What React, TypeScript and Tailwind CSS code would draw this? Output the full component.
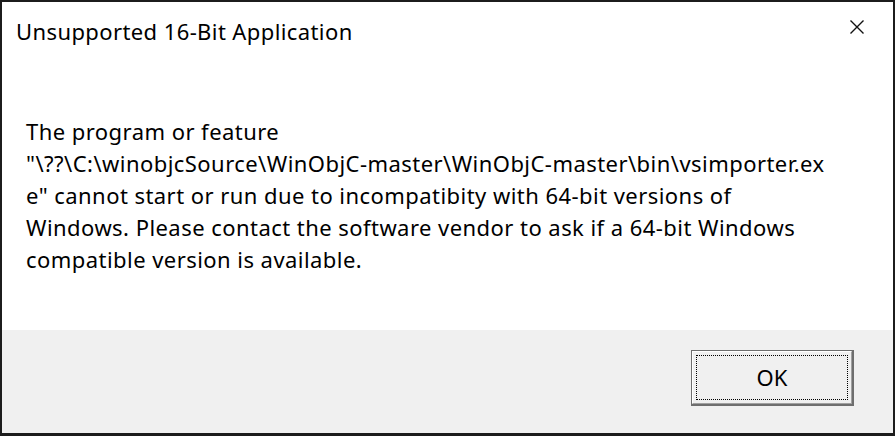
import React from "react";

export default function App() {
  return (
    <div
      className="w-[895px] h-[436px] flex flex-col bg-white border-l-2 border-t-2 border-r-2 border-b-[3px] border-[#1c1c1c] text-black"
      style={{ fontFamily: '"Noto Sans", "Open Sans", sans-serif' }}
    >
      <div className="flex-1 flex flex-col">
        <div className="flex items-start justify-between h-[60px]">
          <div className="pl-[14px] pt-[14px] text-[22px] leading-[30px] tracking-[0.4px]">Unsupported 16-Bit Application</div>
          <div className="pt-[18px] pr-[29px]">
            <svg width="14" height="14" viewBox="0 0 14 14">
              <path d="M0.5 0.5 L13.5 13.5 M13.5 0.5 L0.5 13.5" stroke="#111" strokeWidth="1.4" fill="none" />
            </svg>
          </div>
        </div>
        <div className="pl-[24px] pt-[53px] text-[22px] leading-[32px] tracking-[0.45px]">
          The program or feature
          <br />
          "\??\C:\winobjcSource\WinObjC-master\WinObjC-master\bin\vsimporter.ex
          <br />
          e" cannot start or run due to incompatibity with 64-bit versions of
          <br />
          Windows. Please contact the software vendor to ask if a 64-bit Windows
          <br />
          compatible version is available.
        </div>
      </div>
      <div className="h-[103px] bg-[#f0f0f0] flex justify-end pt-[20px] pr-[39px]">
        <div className="w-[163px] h-[56px] border-l border-t border-r-2 border-b-2 border-[#6e6e6e] bg-[#f0f0f0]">
          <div className="w-full h-full border-l border-t border-white border-r border-b border-r-[#a0a0a0] border-b-[#a0a0a0] p-[3px]">
            <div className="w-full h-full border border-dotted border-black flex items-center justify-center text-[22px]">
              OK
            </div>
          </div>
        </div>
      </div>
    </div>
  );
}
